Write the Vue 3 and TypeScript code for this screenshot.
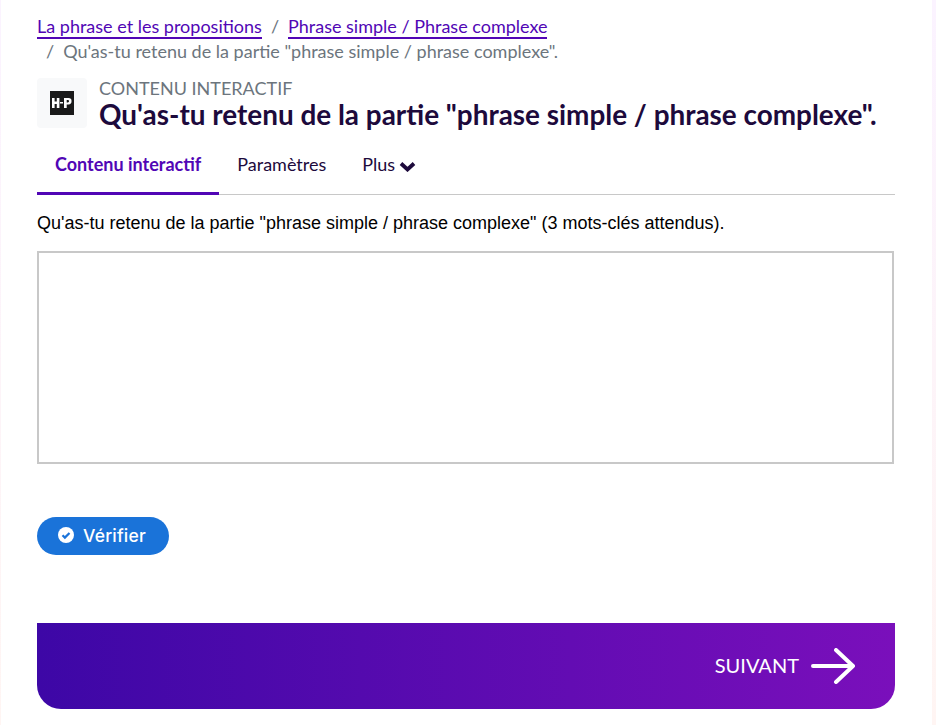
<template>
  <div class="frame">
    <div class="page">
      <nav class="crumbs">
        <a class="crumb">La phrase et les propositions</a>
        <span class="sep">/</span>
        <a class="crumb">Phrase simple / Phrase complexe</a>
        <div class="current"><span class="sep">/</span>{{ title }}.</div>
      </nav>

      <header class="head">
        <div class="logo">
          <div class="h5p"><svg width="20" height="10" viewBox="0 0 20 10"><path fill="#fff" d="M0 0h2.600v3.600h2.200V0h2.600v10H4.800V5.900H2.600V10H0zM8 4h3v1.600H8zM12 0h4.500a3 3 0 0 1 3 3.200 3 3 0 0 1-3 3.200h-1.800V10H12zm2.700 2.100v2.300h1.200a1.100 1.100 0 0 0 0-2.300z"/></svg></div>
        </div>
        <div class="head-text">
          <div class="kind">CONTENU INTERACTIF</div>
          <h1>{{ title }}.</h1>
        </div>
      </header>

      <ul class="tabs">
        <li v-for="tab in tabs" :key="tab" :class="{ active: tab === 'Contenu interactif' }">
          {{ tab }}
          <svg v-if="tab === 'Plus'" class="chev" width="17" height="11" viewBox="0 0 17 11"><path d="M2 2.500l6.500 6 6.500-6" fill="none" stroke="#1d0a3c" stroke-width="3.800"/></svg>
        </li>
      </ul>

      <p class="question">Qu'as-tu retenu de la partie "phrase simple / phrase complexe" (3 mots-clés attendus).</p>
      <textarea class="answer"></textarea>

      <button type="button" class="check">
        <svg width="16" height="16" viewBox="0 0 16 16"><circle cx="8" cy="8" r="8" fill="#fff"/><path d="M4.500 8.200l2.400 2.400 4.600-4.600" fill="none" stroke="#1a73d9" stroke-width="2.200"/></svg>
        Vérifier
      </button>

      <footer class="next">
        <span class="next-label">SUIVANT</span>
        <svg width="46" height="36" viewBox="0 0 46 36"><path d="M2 18h40M25 2l17 16-17 16" fill="none" stroke="#fff" stroke-width="4" stroke-linecap="round" stroke-linejoin="round"/></svg>
      </footer>
    </div>
  </div>
</template>

<script setup lang="ts">
const title = 'Qu\'as-tu retenu de la partie "phrase simple / phrase complexe"'
const tabs: string[] = ['Contenu interactif', 'Paramètres', 'Plus']
</script>

<style scoped>
.frame {
  box-sizing: border-box;
  width: 936px;
  height: 725px;
  padding: 0 4px 0 1px;
  background: linear-gradient(180deg, #fbf3ff, #fff5f3);
}

.page {
  box-sizing: border-box;
  height: 725px;
  padding: 14px 37px 0 36px;
  overflow: hidden;
  font-family: Lato, sans-serif;
  background: #fff;
}

.crumbs {
  font-size: 18px;
  line-height: 24px;
  color: #6c757d;
  height: 50px;
}

.crumb {
  display: inline-block;
  height: 23px;
  color: #5106b5;
  border-bottom: 2px solid #5106b5;
}

.sep {
  margin: 0 9px;
}

.current {
  height: 24px;
}

.head {
  display: flex;
  gap: 12px;
  margin-top: 14px;
}

.logo {
  width: 50px;
  height: 50px;
  border-radius: 4px;
  background: #f8f9fa;
  display: flex;
  align-items: center;
  justify-content: center;
}

.h5p {
  width: 24px;
  height: 24px;
  background: #1a1a1a;
  display: flex;
  align-items: center;
  justify-content: center;
}

.kind {
  font-size: 18px;
  line-height: 20px;
  color: #6c757d;
}

h1 {
  margin: 0;
  font-size: 27.900px;
  line-height: 32px;
  font-weight: 700;
  color: #1d0a3c;
  white-space: nowrap;
}

.tabs {
  display: flex;
  list-style: none;
  margin: 13px 0 0;
  padding: 0;
  border-bottom: 1px solid #c8c8c8;
}

.tabs li {
  height: 51px;
  padding: 0 18px;
  font-size: 18px;
  line-height: 42px;
  color: #1d0a3c;
  margin-bottom: -1px;
}

.tabs li.active {
  font-weight: 700;
  color: #5106b5;
  border-bottom: 3px solid #5106b5;
  height: 49px;
}

.chev {
  margin-left: -1px;
  vertical-align: -1px;
}

.question {
  margin: 16px 0 0;
  font-family: 'Liberation Sans', Arial, sans-serif;
  font-size: 18px;
  line-height: 24px;
  color: #000;
}

.answer {
  display: block;
  box-sizing: border-box;
  width: 857px;
  height: 213px;
  margin-top: 16px;
  border: 2px solid #c8c8c8;
  outline: none;
  resize: none;
  background: #fff;
}

.check {
  display: flex;
  align-items: center;
  gap: 9px;
  width: 132px;
  height: 38px;
  margin-top: 53px;
  padding: 0 0 2px 21px;
  border: 0;
  border-radius: 19px;
  background: #1a73d9;
  color: #fff;
  font-family: Inter, sans-serif;
  font-size: 17.500px;
  letter-spacing: 0.2px;
  font-weight: 500;
}

.next {
  display: flex;
  align-items: center;
  justify-content: flex-end;
  gap: 12px;
  height: 86px;
  margin-top: 68px;
  padding-right: 38px;
  border-radius: 0 0 24px 24px;
  background: linear-gradient(90deg, #3d07a6, #7a0fbb);
  color: #fff;
  font-size: 20px;
}

.next-label {
  margin-bottom: 3px;
}
</style>
